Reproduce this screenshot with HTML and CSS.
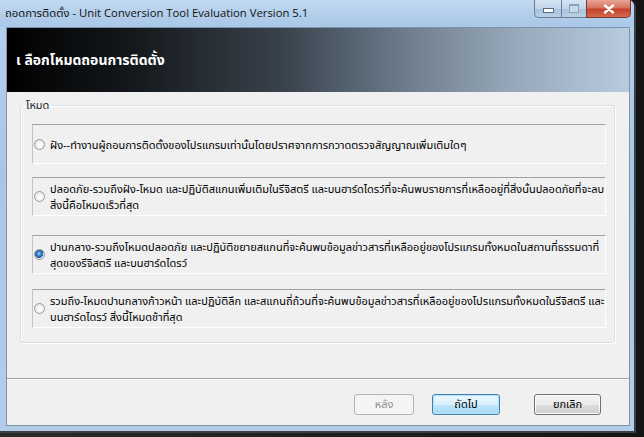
FILE: index.html
```html
<!DOCTYPE html>
<html lang="th">

<head>
    <meta charset="UTF-8">
    <meta name="viewport" content="width=device-width, initial-scale=1.0">
    <title>ถอดการติดตั้ง</title>
    <link rel="stylesheet" href="styles.css">
</head>

<body>
    <div class="desktop">
        <div class="window">
            <div class="titlebar">
                <span class="title">ถอดการติดตั้ง - Unit Conversion Tool Evaluation Version 5.1</span>
                <div class="caption">
                    <span class="cap cap-min"><i></i></span>
                    <span class="cap cap-max"><i></i></span>
                    <span class="cap cap-close">
                        <svg width="12" height="10" viewBox="0 0 12 10">
                            <path d="M2 1.5 L10 8.5 M10 1.5 L2 8.5" stroke="#fff" stroke-width="2.4" stroke-linecap="round" />
                        </svg>
                    </span>
                </div>
            </div>

            <div class="client">
                <div class="banner">
                    <h1>เ ลือกโหมดถอนการติดตั้ง</h1>
                </div>

                <fieldset class="group">
                    <legend>โหมด</legend>

                    <label class="option option-first">
                        <span class="radio"></span>
                        <span class="text">ฝัง--ทำงานผู้ถอนการติดตั้งของโปรแกรมเท่านั้นโดยปราศจากการกวาดตรวจสัญญาณเพิ่มเติมใดๆ</span>
                    </label>

                    <label class="option option-second">
                        <span class="radio"></span>
                        <span class="text">ปลอดภัย-รวมถึงฝัง-โหมด และปฏิบัติสแกนเพิ่มเติมในรีจิสตรี และบนฮาร์ดไดรว์ที่จะค้นพบรายการที่เหลืออยู่ที่สิ่งนั้นปลอดภัยที่จะลบ<br>สิ่งนี้คือโหมดเร็วที่สุด</span>
                    </label>

                    <label class="option option-third">
                        <span class="radio checked"></span>
                        <span class="text">ปานกลาง-รวมถึงโหมดปลอดภัย และปฏิบัติขยายสแกนที่จะค้นพบข้อมูลข่าวสารที่เหลืออยู่ของโปรแกรมทั้งหมดในสถานที่ธรรมดาที่<br>สุดของรีจิสตรี และบนฮาร์ดไดรว์</span>
                    </label>

                    <label class="option option-fourth">
                        <span class="radio"></span>
                        <span class="text">รวมถึง-โหมดปานกลางก้าวหน้า และปฏิบัติลึก และสแกนถี่ถ้วนที่จะค้นพบข้อมูลข่าวสารที่เหลืออยู่ของโปรแกรมทั้งหมดในรีจิสตรี และ<br>บนฮาร์ดไดรว์ สิ่งนี้โหมดช้าที่สุด</span>
                    </label>
                </fieldset>

                <div class="footer">
                    <button class="btn btn-back" disabled>หลัง</button>
                    <button class="btn btn-next">ถัดไป</button>
                    <button class="btn btn-cancel">ยกเลิก</button>
                </div>
            </div>
        </div>
    </div>
</body>

</html>
```

FILE: styles.css
```css
body {
    margin: 0;
    background-color: #1c1c1c;
    font-family: Tahoma, "Noto Sans Thai", "DejaVu Sans", sans-serif;
}

.desktop {
    width: 644px;
    height: 437px;
    background: linear-gradient(90deg, #2a2a2a, #141414);
    overflow: hidden;
}

.window {
    width: 636px;
    height: 433px;
    box-sizing: border-box;
    display: flex;
    flex-direction: column;
    background: linear-gradient(180deg, #b7d1ec 0%, #a9c6e6 40%, #b3cde9 100%);
    border-right: 2px solid #3a3f45;
    border-bottom: 2px solid #3a3f45;
    border-radius: 0 7px 0 0;
}

.titlebar {
    height: 27px;
    display: flex;
    justify-content: space-between;
    align-items: flex-start;
    padding-right: 3px;
    background: linear-gradient(180deg, #c3daf1 0%, #b1cdea 60%, #a9c7e7 100%);
    border-radius: 0 7px 0 0;
}

.title {
    padding: 5px 0 0 5px;
    font-family: "Open Sans", "Noto Sans Thai", Tahoma, sans-serif;
    font-size: 11.3px;
    color: #111;
}

.caption {
    display: flex;
}

.cap {
    height: 18px;
    box-sizing: border-box;
    display: flex;
    align-items: center;
    justify-content: center;
    border: 1px solid #6b7d92;
    border-top: none;
    background: linear-gradient(180deg, #d6e4f2 0%, #c0d4ea 50%, #aac2dc 51%, #b9d0e8 100%);
}

.cap-min {
    width: 27px;
    border-radius: 0 0 0 5px;
    border-right: none;
}

.cap-min i {
    width: 9px;
    height: 3px;
    margin-top: 4px;
    background: #fff;
    border: 1px solid #5d6c7c;
}

.cap-max {
    width: 25px;
    border-right: none;
}

.cap-max i {
    width: 8px;
    height: 6px;
    border: 1px solid #8ea0b2;
    border-top-width: 2px;
    background: #c8d8e8;
}

.cap-close {
    width: 45px;
    border-color: #7a3a30;
    border-radius: 0 0 5px 0;
    background: linear-gradient(180deg, #e8a596 0%, #d7735f 45%, #c3412b 55%, #d26a4c 100%);
}

.client {
    flex: 1;
    margin: 0 4px 5px 6px;
    display: flex;
    flex-direction: column;
    background-color: #f0f0f0;
    border: 1px solid #7d94ab;
}

.banner {
    height: 64px;
    display: flex;
    align-items: center;
    background: linear-gradient(90deg, #000 0%, #14181c 20%, #3a444e 45%, #6f7f8f 65%, #98a9bb 82%, #b8cbdf 100%);
}

.banner h1 {
    margin: 0 0 0 9px;
    font-size: 14px;
    font-weight: bold;
    color: #fff;
}

.group {
    margin: 5px 14px 0 13px;
    padding: 10px 8px 14px 11px;
    border: 1px solid #d5dfe5;
    border-radius: 3px;
    box-shadow: inset 1px 1px 0 #fff, 1px 1px 0 #fff;
    display: flex;
    flex-direction: column;
}

.group legend {
    margin-left: -9px;
    padding: 0 3px;
    font-size: 11px;
    color: #222;
}

.option {
    height: 39px;
    box-sizing: border-box;
    display: flex;
    align-items: center;
    border-top: 1px solid #a0a0a0;
    border-left: 1px solid #c4c4c4;
    border-right: 1px solid #fff;
    border-bottom: 1px solid #fff;
    background-color: #f0f0f0;
}

.option-first {
    height: 40px;
}

.option-second {
    margin-top: 13px;
}

.option-third {
    margin-top: 19px;
}

.option-fourth {
    margin-top: 15px;
}

.radio {
    flex: none;
    width: 11px;
    height: 11px;
    margin: 0 5px 0 1px;
    box-sizing: border-box;
    border: 1px solid #979797;
    border-radius: 50%;
    background: radial-gradient(circle at 60% 60%, #ffffff 0%, #f2f2f2 45%, #d9d9d9 100%);
}

.radio.checked {
    background: radial-gradient(circle at 45% 40%, #9fd0f7 0%, #3a7fc8 30%, #1f5aa0 55%, #e8e8e8 62%, #f6f6f6 100%);
}

.text {
    padding-top: 3px;
    font-size: 11px;
    line-height: 16px;
    color: #000;
    white-space: nowrap;
}

.footer {
    margin-top: auto;
    height: 47px;
    box-sizing: border-box;
    display: flex;
    justify-content: flex-end;
    align-items: flex-start;
    padding: 15px 28px 0 0;
    border-top: 1px solid #a0a0a0;
    box-shadow: inset 0 1px 0 #fff;
}

.btn {
    height: 21px;
    padding: 0;
    font-family: Tahoma, "Noto Sans Thai", "DejaVu Sans", sans-serif;
    font-size: 11px;
    color: #000;
    border: 1px solid #707070;
    border-radius: 3px;
    background: linear-gradient(180deg, #f2f2f2 0%, #ebebeb 50%, #dddddd 51%, #cfcfcf 100%);
    box-shadow: inset 0 0 0 1px #fcfcfc;
}

.btn-back {
    width: 60px;
    margin-right: 18px;
    color: #8d8d8d;
    border-color: #b0b5b9;
    background: #f4f4f4;
    box-shadow: none;
}

.btn-next {
    width: 68px;
    margin-right: 34px;
    border-color: #3c7fb1;
    background: linear-gradient(180deg, #eaf6fd 0%, #d9f0fc 50%, #bee6fd 51%, #a7d9f5 100%);
    box-shadow: inset 0 0 0 1px #b8e3f8;
}

.btn-cancel {
    width: 67px;
}
```
